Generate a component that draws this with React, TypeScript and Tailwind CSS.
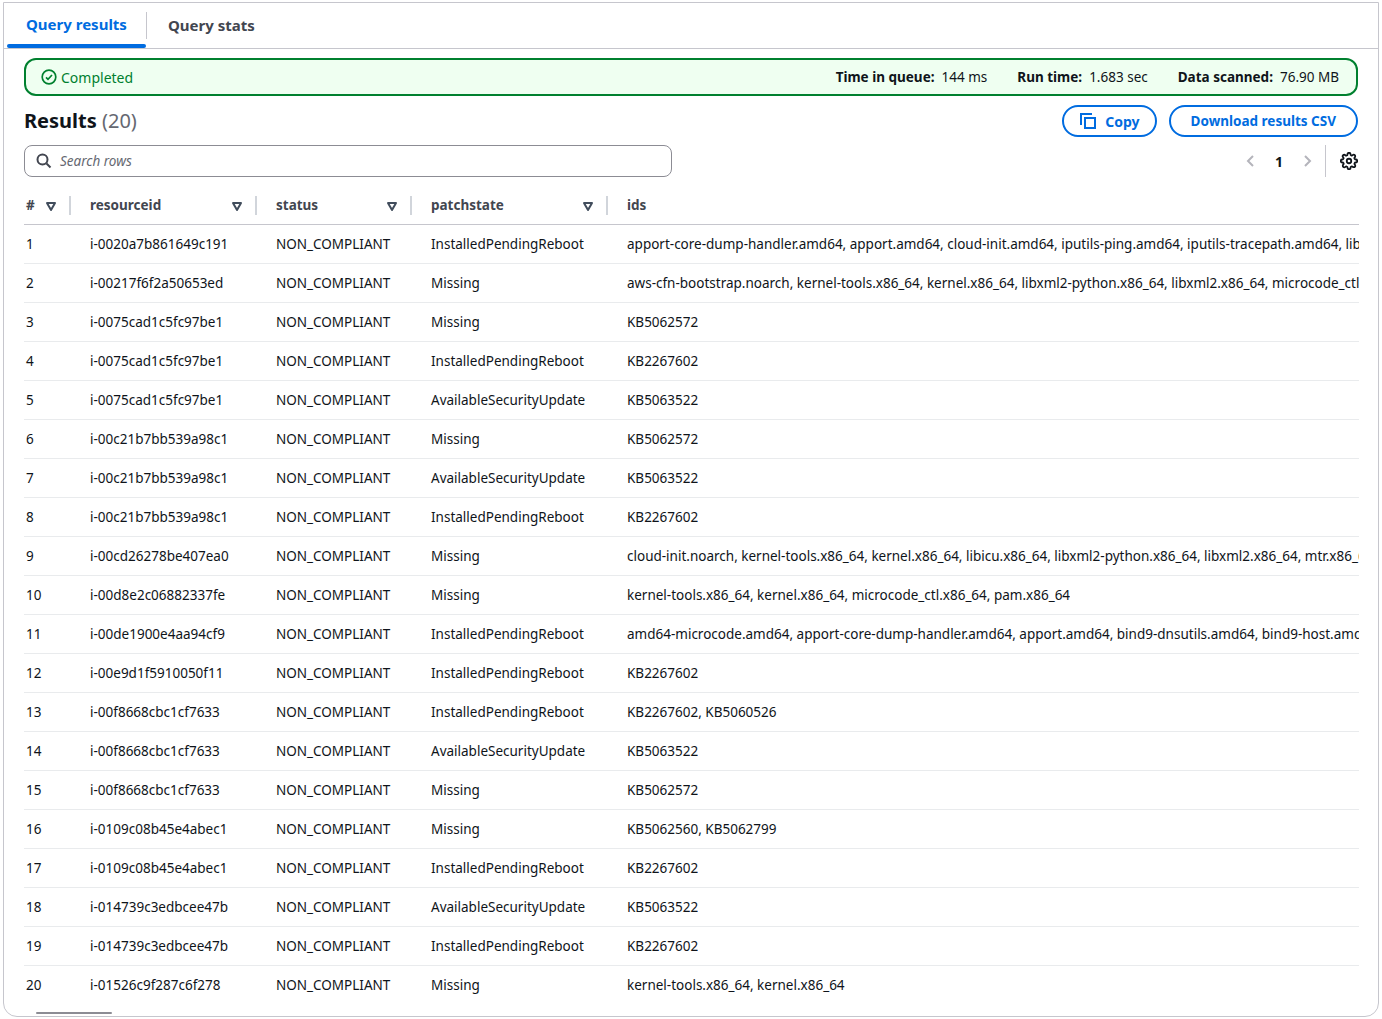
import React from "react";

const rows: [string, string, string][] = [
  ["i-0020a7b861649c191","InstalledPendingReboot","apport-core-dump-handler.amd64, apport.amd64, cloud-init.amd64, iputils-ping.amd64, iputils-tracepath.amd64, libc-bin.amd64, libc6.amd64"],
  ["i-00217f6f2a50653ed","Missing","aws-cfn-bootstrap.noarch, kernel-tools.x86_64, kernel.x86_64, libxml2-python.x86_64, libxml2.x86_64, microcode_ctl.x86_64"],
  ["i-0075cad1c5fc97be1","Missing","KB5062572"],
  ["i-0075cad1c5fc97be1","InstalledPendingReboot","KB2267602"],
  ["i-0075cad1c5fc97be1","AvailableSecurityUpdate","KB5063522"],
  ["i-00c21b7bb539a98c1","Missing","KB5062572"],
  ["i-00c21b7bb539a98c1","AvailableSecurityUpdate","KB5063522"],
  ["i-00c21b7bb539a98c1","InstalledPendingReboot","KB2267602"],
  ["i-00cd26278be407ea0","Missing","cloud-init.noarch, kernel-tools.x86_64, kernel.x86_64, libicu.x86_64, libxml2-python.x86_64, libxml2.x86_64, mtr.x86_64"],
  ["i-00d8e2c06882337fe","Missing","kernel-tools.x86_64, kernel.x86_64, microcode_ctl.x86_64, pam.x86_64"],
  ["i-00de1900e4aa94cf9","InstalledPendingReboot","amd64-microcode.amd64, apport-core-dump-handler.amd64, apport.amd64, bind9-dnsutils.amd64, bind9-host.amd64"],
  ["i-00e9d1f5910050f11","InstalledPendingReboot","KB2267602"],
  ["i-00f8668cbc1cf7633","InstalledPendingReboot","KB2267602, KB5060526"],
  ["i-00f8668cbc1cf7633","AvailableSecurityUpdate","KB5063522"],
  ["i-00f8668cbc1cf7633","Missing","KB5062572"],
  ["i-0109c08b45e4abec1","Missing","KB5062560, KB5062799"],
  ["i-0109c08b45e4abec1","InstalledPendingReboot","KB2267602"],
  ["i-014739c3edbcee47b","AvailableSecurityUpdate","KB5063522"],
  ["i-014739c3edbcee47b","InstalledPendingReboot","KB2267602"],
  ["i-01526c9f287c6f278","Missing","kernel-tools.x86_64, kernel.x86_64"],
];

const Tri = () => (
  <svg width="12" height="12" viewBox="0 0 12 12"><path d="M2 3h8L6 10z" fill="none" stroke="#414d5c" strokeWidth="2" strokeLinejoin="round"/></svg>
);

const Head = ({ label, w }: { label: string; w: string }) => (
  <div className={`${w} flex items-center h-full shrink-0`}>
    <div className="flex-1 flex items-center justify-between pr-[12px]">
      <span>{label}</span>
      <Tri />
    </div>
    <div className="w-[2px] h-[19px] bg-[#d1d5db]" />
    <div className="w-[19px]" />
  </div>
);

export default function App() {
  return (
    <div className="w-[1382px] h-[1019px] bg-white text-[#0f141a] text-[14px] overflow-hidden" style={{ fontFamily: '"Noto Sans", "Open Sans", sans-serif' }}>
      <div className="mx-[3px] mt-[2px] h-[1015px] border border-[#c6c6cd] rounded-b-[14px] relative overflow-hidden">
        <div className="flex h-[46px] border-b border-[#c6c6cd] px-[3px]">
          <div className="flex flex-col"><div className="flex-1 flex items-center pt-[2px] px-[19px] font-bold text-[15px] text-[#006ce0]">Query results</div><div className="h-[4px] bg-[#006ce0] rounded-full" /></div>
          <div className="w-px bg-[#c6c6cd] my-[9px]" />
          <div className="flex items-center px-[21px] font-bold text-[15px] text-[#424650]">Query stats</div>
        </div>
        <div className="px-[20px]">
          <div className="mt-[9px] h-[38px] border-2 border-[#00802f] bg-[#effff1] rounded-[12px] flex items-center px-[15px]">
            <svg width="16" height="16" viewBox="0 0 16 16" className="mr-[4px]"><circle cx="8" cy="8" r="6.8" fill="none" stroke="#00802f" strokeWidth="1.7"/><path d="M5 8.3l2 2 4-4.3" fill="none" stroke="#00802f" strokeWidth="1.7"/></svg>
            <span className="text-[#00802f]">Completed</span>
            <div className="ml-auto flex gap-[30px] pr-[2px] text-[13.5px]">
              <span><b>Time in queue:</b>&nbsp; 144 ms</span>
              <span><b>Run time:</b>&nbsp; 1.683 sec</span>
              <span><b>Data scanned:</b>&nbsp; 76.90 MB</span>
            </div>
          </div>
          <div className="flex items-center mt-[9px] h-[32px]">
            <div className="text-[20px] font-bold">Results <span className="font-normal text-[#656871]">(20)</span></div>
            <div className="ml-auto flex gap-[12px]">
              <button className="h-[32px] px-[15px] rounded-full border-2 border-[#006ce0] text-[#006ce0] font-bold flex items-center gap-[8px]">
                <svg width="18" height="18" viewBox="0 0 18 18" fill="none" stroke="#006ce0" strokeWidth="2"><path d="M2 13V2h11"/><rect x="6" y="6" width="10" height="10"/></svg>Copy</button>
              <button className="h-[32px] px-[20px] rounded-full border-2 border-[#006ce0] text-[#006ce0] font-bold text-[13.5px]">Download results CSV</button>
            </div>
          </div>
          <div className="flex items-center mt-[8px] h-[32px]">
            <div className="w-[648px] h-[32px] border border-[#8c8c94] rounded-[8px] flex items-center px-[11px] gap-[8px]">
              <svg width="16" height="16" viewBox="0 0 16 16" fill="none" stroke="#424650" strokeWidth="2"><circle cx="6.5" cy="6.5" r="5"/><path d="M10.5 10.5l4 4"/></svg>
              <span className="italic text-[#656871] text-[13.5px]">Search rows</span>
            </div>
            <div className="ml-auto flex items-center h-full">
              <svg width="12" height="14" viewBox="0 0 12 14" fill="none" stroke="#b4b4bb" strokeWidth="2"><path d="M8 2L3 7l5 5"/></svg>
              <span className="font-bold mx-[18px]">1</span>
              <svg width="12" height="14" viewBox="0 0 12 14" fill="none" stroke="#b4b4bb" strokeWidth="2"><path d="M4 2l5 5-5 5"/></svg>
              <div className="w-px h-[32px] bg-[#c6c6cd] ml-[12px] mr-[14px]" />
              <svg width="18" height="18" viewBox="0 0 24 24" fill="none" stroke="#0f141a" strokeWidth="2.4"><circle cx="12" cy="12" r="3"/><path d="M19.4 15a1.65 1.65 0 0 0 .33 1.82l.06.06a2 2 0 1 1-2.83 2.830l-.06-.06a1.65 1.65 0 0 0-1.82-.33 1.65 1.65 0 0 0-1 1.51V21a2 2 0 1 1-4 0v-.09A1.65 1.65 0 0 0 9 19.4a1.65 1.65 0 0 0-1.82.33l-.06.06a2 2 0 1 1-2.83-2.83l.06-.06A1.65 1.65 0 0 0 4.68 15a1.65 1.65 0 0 0-1.51-1H3a2 2 0 1 1 0-4h.09A1.65 1.65 0 0 0 4.6 9a1.65 1.65 0 0 0-.33-1.82l-.06-.06a2 2 0 1 1 2.83-2.83l.06.06A1.65 1.65 0 0 0 9 4.68a1.65 1.65 0 0 0 1-1.51V3a2 2 0 1 1 4 0v.09a1.65 1.65 0 0 0 1 1.51 1.65 1.65 0 0 0 1.82-.33l.06-.06a2 2 0 1 1 2.83 2.830l-.06.06A1.65 1.65 0 0 0 19.4 9a1.65 1.65 0 0 0 1.51 1H21a2 2 0 1 1 0 4h-.09a1.65 1.65 0 0 0-1.51 1z"/></svg>
            </div>
          </div>
          <div className="mt-[10px] w-[1335px] overflow-hidden text-[13.5px]">
            <div className="flex items-center h-[38px] font-bold text-[#424650] border-b border-[#c6c6cd] pl-[2px]">
              <Head label="#" w="w-[64px]" />
              <Head label="resourceid" w="w-[186px]" />
              <Head label="status" w="w-[155px]" />
              <Head label="patchstate" w="w-[196px]" />
              <span>ids</span>
            </div>
            {rows.map((r, i) => (
              <div key={i} className={`flex items-center h-[39px] pl-[2px] whitespace-nowrap ${i < rows.length - 1 ? "border-b border-[#e9ebed]" : ""}`}>
                <div className="w-[64px] shrink-0">{i + 1}</div>
                <div className="w-[186px] shrink-0">{r[0]}</div>
                <div className="w-[155px] shrink-0">NON_COMPLIANT</div>
                <div className="w-[196px] shrink-0">{r[1]}</div>
                <div className="overflow-hidden">{r[2]}</div>
              </div>
            ))}
          </div>
        </div>
        <div className="absolute left-[32px] bottom-[2px] w-[76px] h-[2px] bg-[#8c8c94] rounded" />
      </div>
    </div>
  );
}
